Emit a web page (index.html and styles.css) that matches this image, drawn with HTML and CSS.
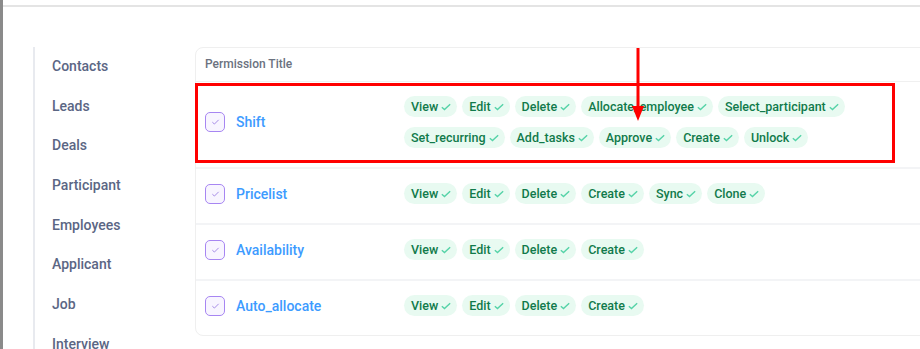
FILE: index.html
```html
<!DOCTYPE html>
<html lang="en">
<head>
  <meta charset="UTF-8">
  <meta name="viewport" content="width=device-width, initial-scale=1.0">
  <title>Permissions</title>
  <link rel="stylesheet" href="styles.css">
</head>
<body>
  <div class="edge"></div>

  <div class="page">
    <!-- Module list -->
    <ul class="modules">
      <li>Contacts</li>
      <li>Leads</li>
      <li>Deals</li>
      <li>Participant</li>
      <li>Employees</li>
      <li>Applicant</li>
      <li>Job</li>
      <li>Interview</li>
    </ul>

    <!-- Permission table -->
    <div class="card">
      <div class="card-head">Permission Title</div>

      <div class="perm-row">
        <div class="perm-name"><span class="box"><svg viewBox="0 0 10 8"><path d="M1.5 4.2 3.8 6.3 8.5 1.6"/></svg></span>Shift</div>
        <div class="chips">
          <span class="chip">View<svg viewBox="0 0 12 9"><path d="M1 4.8 4.2 7.6 11 1.2"/></svg></span>
          <span class="chip">Edit<svg viewBox="0 0 12 9"><path d="M1 4.8 4.2 7.6 11 1.2"/></svg></span>
          <span class="chip">Delete<svg viewBox="0 0 12 9"><path d="M1 4.8 4.2 7.6 11 1.2"/></svg></span>
          <span class="chip">Allocate_employee<svg viewBox="0 0 12 9"><path d="M1 4.8 4.2 7.6 11 1.2"/></svg></span>
          <span class="chip">Select_participant<svg viewBox="0 0 12 9"><path d="M1 4.8 4.2 7.6 11 1.2"/></svg></span>
          <span class="chip">Set_recurring<svg viewBox="0 0 12 9"><path d="M1 4.8 4.2 7.6 11 1.2"/></svg></span>
          <span class="chip">Add_tasks<svg viewBox="0 0 12 9"><path d="M1 4.8 4.2 7.6 11 1.2"/></svg></span>
          <span class="chip">Approve<svg viewBox="0 0 12 9"><path d="M1 4.8 4.2 7.6 11 1.2"/></svg></span>
          <span class="chip">Create<svg viewBox="0 0 12 9"><path d="M1 4.8 4.2 7.6 11 1.2"/></svg></span>
          <span class="chip">Unlock<svg viewBox="0 0 12 9"><path d="M1 4.8 4.2 7.6 11 1.2"/></svg></span>
        </div>
      </div>

      <div class="perm-row">
        <div class="perm-name"><span class="box"><svg viewBox="0 0 10 8"><path d="M1.5 4.2 3.8 6.3 8.5 1.6"/></svg></span>Pricelist</div>
        <div class="chips">
          <span class="chip">View<svg viewBox="0 0 12 9"><path d="M1 4.8 4.2 7.6 11 1.2"/></svg></span>
          <span class="chip">Edit<svg viewBox="0 0 12 9"><path d="M1 4.8 4.2 7.6 11 1.2"/></svg></span>
          <span class="chip">Delete<svg viewBox="0 0 12 9"><path d="M1 4.8 4.2 7.6 11 1.2"/></svg></span>
          <span class="chip">Create<svg viewBox="0 0 12 9"><path d="M1 4.8 4.2 7.6 11 1.2"/></svg></span>
          <span class="chip">Sync<svg viewBox="0 0 12 9"><path d="M1 4.8 4.2 7.6 11 1.2"/></svg></span>
          <span class="chip">Clone<svg viewBox="0 0 12 9"><path d="M1 4.8 4.2 7.6 11 1.2"/></svg></span>
        </div>
      </div>

      <div class="perm-row">
        <div class="perm-name"><span class="box"><svg viewBox="0 0 10 8"><path d="M1.5 4.2 3.8 6.3 8.5 1.6"/></svg></span>Availability</div>
        <div class="chips">
          <span class="chip">View<svg viewBox="0 0 12 9"><path d="M1 4.8 4.2 7.6 11 1.2"/></svg></span>
          <span class="chip">Edit<svg viewBox="0 0 12 9"><path d="M1 4.8 4.2 7.6 11 1.2"/></svg></span>
          <span class="chip">Delete<svg viewBox="0 0 12 9"><path d="M1 4.8 4.2 7.6 11 1.2"/></svg></span>
          <span class="chip">Create<svg viewBox="0 0 12 9"><path d="M1 4.8 4.2 7.6 11 1.2"/></svg></span>
        </div>
      </div>

      <div class="perm-row">
        <div class="perm-name"><span class="box"><svg viewBox="0 0 10 8"><path d="M1.5 4.2 3.8 6.3 8.5 1.6"/></svg></span>Auto_allocate</div>
        <div class="chips">
          <span class="chip">View<svg viewBox="0 0 12 9"><path d="M1 4.8 4.2 7.6 11 1.2"/></svg></span>
          <span class="chip">Edit<svg viewBox="0 0 12 9"><path d="M1 4.8 4.2 7.6 11 1.2"/></svg></span>
          <span class="chip">Delete<svg viewBox="0 0 12 9"><path d="M1 4.8 4.2 7.6 11 1.2"/></svg></span>
          <span class="chip">Create<svg viewBox="0 0 12 9"><path d="M1 4.8 4.2 7.6 11 1.2"/></svg></span>
        </div>
      </div>
    </div>
  </div>

  <!-- Screenshot annotation -->
  <svg class="annot" width="920" height="349" viewBox="0 0 920 349">
    <rect x="196.5" y="84.5" width="697" height="77" fill="none" stroke="#ff0000" stroke-width="3"/>
    <line x1="638" y1="48" x2="638" y2="108" stroke="#ff0000" stroke-width="3"/>
    <polygon points="632,106 644,106 638,121" fill="#ff0000"/>
  </svg>
</body>
</html>
```

FILE: styles.css
```css
html, body {
  margin: 0;
  height: 100%;
}
body {
  position: relative;
  overflow: hidden;
  background-color: #fff;
  font-family: Roboto, "Noto Sans", Arial, sans-serif;
  color: #333;
}
.edge {
  position: absolute;
  left: 0;
  top: 0;
  bottom: 0;
  width: 3px;
  background-color: #8a8a8a;
}
.page {
  margin: 5px 0 0 3px;
  border-top: 2px solid #e4e4e4;
  padding: 40px 0 0 30px;
  display: flex;
  align-items: flex-start;
}
.modules {
  flex: 0 0 auto;
  list-style: none;
  margin: 0;
  padding: 0 0 40px 17px;
  width: 143px;
  border-left: 2px solid #e8eaef;
}
.modules li {
  height: 39.7px;
  line-height: 39.7px;
  font-size: 14px;
  font-weight: 500;
  color: #5b6684;
}
.card {
  flex: 0 0 760px;
  border: 1px solid #efefef;
  border-radius: 8px;
  background-color: #fff;
}
.card-head {
  height: 33px;
  line-height: 33px;
  padding: 0 9px;
  font-size: 12px;
  font-weight: 500;
  color: #6b7280;
  border-bottom: 1px solid #f0f0f0;
}
.perm-row {
  display: flex;
  padding: 14px 0 19px;
  border-bottom: 2px solid #f3f4f6;
}
.perm-row:last-child {
  border-bottom: none;
}
.perm-name {
  flex: 0 0 199px;
  padding-left: 9px;
  display: flex;
  align-items: center;
  gap: 11px;
  font-size: 14px;
  font-weight: 500;
  color: #3d9bff;
}
.box {
  width: 18px;
  height: 18px;
  border: 1.5px solid #a786f2;
  border-radius: 5px;
  background-color: #f8f5ff;
  display: flex;
  align-items: center;
  justify-content: center;
}
.box svg {
  width: 9px;
  height: 8px;
  fill: none;
  stroke: #a58be6;
  stroke-width: 1.1;
}
.chips {
  flex: 1;
  display: flex;
  flex-wrap: wrap;
  gap: 10px 5px;
  padding-right: 40px;
}
.chip {
  height: 21px;
  padding: 0 6px 0 7px;
  border-radius: 11px;
  background-color: #e8faf1;
  color: #117a4b;
  font-size: 12.5px;
  font-weight: 500;
  display: flex;
  align-items: center;
  gap: 3px;
}
.chip svg {
  width: 10px;
  height: 8px;
  fill: none;
  stroke: #56d3a8;
  stroke-width: 1.7;
}
.annot {
  position: absolute;
  left: 0;
  top: 0;
}
```
